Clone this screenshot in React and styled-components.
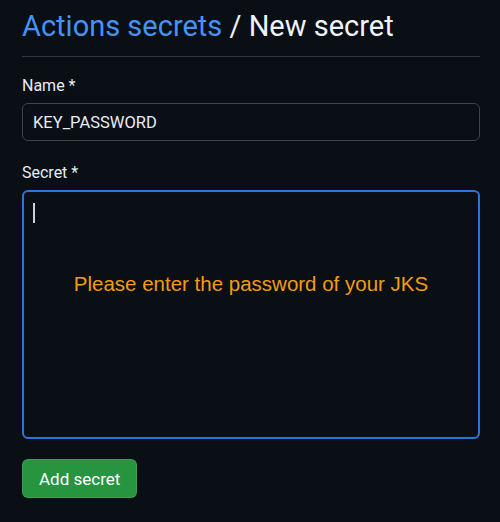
import React from 'react';
import styled, { createGlobalStyle } from 'styled-components';

const GlobalStyle = createGlobalStyle`
  html, body {
    margin: 0;
    padding: 0;
    background: #0a0e15;
  }
  body {
    font-family: Roboto, "Noto Sans", "Liberation Sans", sans-serif;
    color: #e6edf3;
  }
`;

const Page = styled.div`
  width: 500px;
  height: 522px;
  box-sizing: border-box;
  padding: 0 17px 0 22px;
  border-left: 3px solid #05070b; /* darker strip on the left edge */
  margin-left: -3px;
  overflow: hidden;
`;

const Title = styled.h1`
  margin: 0;
  padding-top: 6px;
  font-size: 29px;
  font-weight: 400;
  line-height: 40px;
  color: #f0f3f6;
  padding-bottom: 10px;
  border-bottom: 1px solid #30363d;
`;

const Crumb = styled.span`
  color: #4493f8;
`;

const Form = styled.form`
  display: flex;
  flex-direction: column;
  padding-top: 18px;
`;

const Field = styled.div`
  display: flex;
  flex-direction: column;
  gap: 6px;
  margin-bottom: ${p => p.$gap || 20}px;
`;

const Label = styled.label`
  font-size: 16px;
  line-height: 22px;
  color: #e6edf3;
`;

const Input = styled.div`
  height: 38px;
  box-sizing: border-box;
  border: 1px solid #3d444d;
  border-radius: 6px;
  background: #0a0e15;
  padding: 0 10px;
  display: flex;
  align-items: center;
  font-size: 16.5px;
  color: #e6edf3;
`;

const TextArea = styled.div`
  position: relative;
  height: 249px;
  box-sizing: border-box;
  border: 2px solid #2f75d6;
  border-radius: 6px;
  background: #0a0e15;
  padding: 11px 9px;
`;

const Caret = styled.div`
  width: 2px;
  height: 20px;
  background: #c9d1d9;
`;

const Note = styled.div`
  position: absolute;
  left: 0;
  right: 0;
  top: 80px;
  text-align: center;
  font-family: "Liberation Sans", Arial, sans-serif;
  font-size: 20.5px;
  color: #f39c12;
`;

const Button = styled.button`
  align-self: flex-start;
  height: 39px;
  padding: 0 16px;
  border: 1px solid rgba(240, 246, 252, 0.1);
  border-radius: 6px;
  background: #27953f;
  color: #ffffff;
  font-family: Roboto, "Noto Sans", sans-serif;
  font-size: 17px;
  font-weight: 400;
  cursor: pointer;
`;

export default function App() {
  return (
    <>
      <GlobalStyle />
      <Page>
        <Title>
          <Crumb>Actions secrets</Crumb> / New secret
        </Title>
        <Form onSubmit={e => e.preventDefault()}>
          <Field $gap={21}>
            <Label>Name *</Label>
            <Input>KEY_PASSWORD</Input>
          </Field>
          <Field $gap={20}>
            <Label>Secret *</Label>
            <TextArea>
              <Caret />
              <Note>Please enter the password of your JKS</Note>
            </TextArea>
          </Field>
          <Button type="submit">Add secret</Button>
        </Form>
      </Page>
    </>
  );
}
